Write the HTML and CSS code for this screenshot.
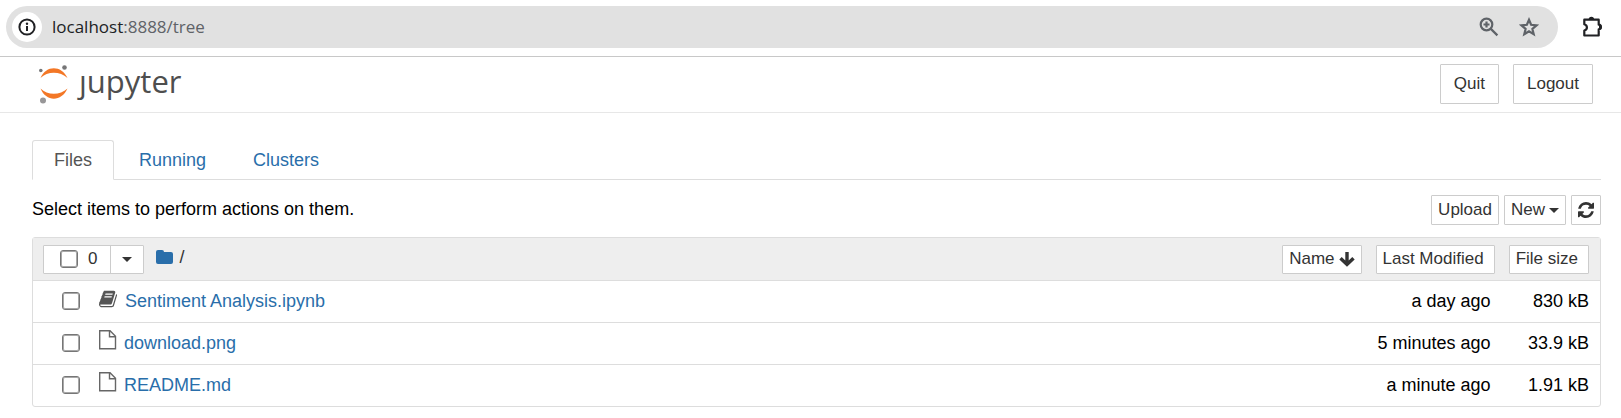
FILE: index.html
```html
<!DOCTYPE html>
<html lang="en">
<head>
<meta charset="utf-8">
<title>Home Page - Select or create a notebook</title>
<link rel="stylesheet" href="styles.css">
</head>
<body>
<div class="browser-bar">
  <div class="omnibox">
    <button class="round" type="button" aria-label="View site information">
      <svg width="18" height="18" viewBox="0 0 18 18"><circle cx="9" cy="9" r="7.6" fill="none" stroke="#202124" stroke-width="2"/><path d="M9 8v5" stroke="#202124" stroke-width="2"/><circle cx="9" cy="5.700" r="1.200" fill="#202124"/></svg>
    </button>
    <div class="url"><span class="host">localhost</span>:8888/tree</div>
    <button class="plain" type="button" aria-label="Zoom">
      <svg width="20" height="20" viewBox="0 0 20 20" fill="none" stroke="#5f6368" stroke-width="2.200"><circle cx="7.500" cy="7.500" r="5.800"/><path d="M11.600 11.600l6.800 6.800M7.500 4.500v6M4.500 7.500h6"/></svg>
    </button>
    <button class="plain" type="button" aria-label="Bookmark this tab">
      <svg width="20" height="20" viewBox="0 0 20 20" fill="none" stroke="#5f6368" stroke-width="2.200"><path d="M10 2.800l2.100 5 5.500.5-4.200 3.600 1.300 5.300-4.700-2.900-4.700 2.900 1.300-5.300-4.200-3.600 5.500-.5z"/></svg>
    </button>
  </div>
  <button class="plain" type="button" aria-label="Extensions">
    <svg width="22" height="22" viewBox="0 0 22 22"><path d="M3.300 3.700h14.400v5q2.200.2 2.200 2.300t-2.200 2.300v6.200H3.300v-5q2.600-.8 2.600-3.100T3.300 8.300z" fill="none" stroke="#202124" stroke-width="2.200" stroke-linejoin="round"/><path d="M7.700 3.500a2.700 2.700 0 0 1 5.400 0zM18 8.300a2.700 2.700 0 0 1 0 5.400z" fill="#202124"/></svg>
  </button>
</div>

<header class="header">
  <a class="logo" href="#" aria-label="jupyter">
    <svg width="32" height="40" viewBox="0 0 32 40"><path d="M2.500 14C8 1 23.500 1 29.500 14 22 7 9.500 7 2.500 14zM2.500 24.500C8 38 23.500 38 29.500 24.500 22 31.500 9.500 31.500 2.500 24.500z" fill="#f37726"/><circle cx="2.800" cy="6.500" r="1.800" fill="#767677"/><circle cx="26.500" cy="3.500" r="2.300" fill="#767677"/><circle cx="5" cy="36.500" r="3" fill="#989798"/></svg>
    <span class="wordmark">ȷupyter</span>
  </a>
  <button class="btn large" type="button">Quit</button>
  <button class="btn large" type="button">Logout</button>
</header>

<main class="main">
  <nav class="tabs">
    <a class="tab active" href="#files">Files</a>
    <a class="tab" href="#running">Running</a>
    <a class="tab" href="#clusters">Clusters</a>
  </nav>

  <div class="toolbar">
    <p class="hint">Select items to perform actions on them.</p>
    <button class="btn" type="button">Upload</button>
    <button class="btn" type="button">New <span class="caret"></span></button>
    <button class="btn refresh" type="button" aria-label="Refresh notebook list">
      <svg width="16" height="16" viewBox="0 0 1536 1536" fill="#333"><path d="M1511 928q0 5-1 7-64 268-268 434.500T764 1536q-146 0-282.500-55T238 1324l-129 129q-19 19-45 19t-45-19-19-45V960q0-26 19-45t45-19h448q26 0 45 19t19 45-19 45l-137 137q71 66 161 102t187 36q134 0 250-65t186-179q11-17 53-117 8-23 30-23h192q13 0 22.500 9.500t9.500 22.500zm25-800v448q0 26-19 45t-45 19h-448q-26 0-45-19t-19-45 19-45l138-138Q969 256 768 256q-134 0-250 65T332 500q-11 17-53 117-8 23-30 23H50q-13 0-22.500-9.500T18 608v-7q65-268 270-434.500T768 0q146 0 284 55.500T1297 212l130-129q19-19 45-19t45 19 19 45z"/></svg>
    </button>
  </div>

  <table class="list">
    <thead>
      <tr>
        <th class="col-name">
          <div class="list-head">
            <div class="select-group">
              <label class="select-all"><input class="check" type="checkbox"><span>0</span></label>
              <button class="select-menu" type="button" aria-label="Selection menu"><span class="caret"></span></button>
            </div>
            <a class="crumb" href="#" aria-label="Root folder"><svg width="18" height="15" viewBox="0 0 18 15"><path d="M0 2Q0 0 2 0h4q2 0 2 2h7q2 0 2 2v8q0 2-2 2H2q-2 0-2-2z" fill="#296eaa"/></svg></a>
            <span class="slash">/</span>
            <button class="btn sort" type="button">Name <svg width="16" height="15" viewBox="0 0 16 15" fill="none" stroke="#333" stroke-width="3.400"><path d="M8 0v12M1.500 6.200l6.500 6.300 6.500-6.300"/></svg></button>
          </div>
        </th>
        <th class="col-side"><button class="btn sort wide" type="button">Last Modified</button></th>
        <th class="col-side"><button class="btn sort wide" type="button">File size</button></th>
      </tr>
    </thead>
    <tbody>
      <tr>
        <td><div class="item"><input class="check" type="checkbox" aria-label="Select Sentiment Analysis.ipynb">
          <svg class="icon" width="18" height="18" viewBox="0 0 1664 1536"><path d="M1639 350q40 57 18 129l-275 906q-19 64-76.500 107.500T1183 1536H260q-77 0-148.500-53.500T12 1351q-24-67-2-127 0-4 3-27t4-37q1-8-3-21.500t-3-19.500q2-11 8-21t16.500-23.500T52 1051q23-38 45-91.500t30-91.500q3-10 .5-30t-.5-28q3-11 17-28t17-23q21-36 42-92t25-90q1-9-2.500-32t.5-28q4-13 22-30.500t22-22.500q19-26 42.500-84.500T340 283q1-8-3-25.500t-2-26.500q2-8 9-18t18-23 17-21q8-12 16.500-30.500t15-35 16-36 19.500-32T469.500 12t36-11.500T553 6l-1 3q38-9 51-9h761q74 0 114 56t18 130l-274 906q-36 119-71.500 153.500T1022 1280H153q-27 0-38 15-11 16-1 43 24 70 144 70h923q29 0 56-15.500t35-41.500l300-987q7-22 5-57 38 15 59 43zM575 352q-4 13 2 22.500t20 9.500h608q13 0 25.500-9.500T1247 352l21-64q4-13-2-22.500t-20-9.500H638q-13 0-25.500 9.500T596 288zm-83 256q-4 13 2 22.500t20 9.500h608q13 0 25.500-9.500T1164 608l21-64q4-13-2-22.500t-20-9.500H555q-13 0-25.500 9.500T513 544z" fill="#555"/></svg>
          <a class="link" href="#">Sentiment Analysis.ipynb</a></div></td>
        <td class="modified">a day ago</td>
        <td class="size">830 kB</td>
      </tr>
      <tr>
        <td><div class="item"><input class="check" type="checkbox" aria-label="Select download.png">
          <svg class="icon file" width="18" height="20" viewBox="0 0 18 20"><path d="M.7.700h10.300l5.500 5.500v12.600H.7zM10.500.700v6h6" fill="none" stroke="#666" stroke-width="1.400"/></svg>
          <a class="link" href="#">download.png</a></div></td>
        <td class="modified">5 minutes ago</td>
        <td class="size">33.9 kB</td>
      </tr>
      <tr>
        <td><div class="item"><input class="check" type="checkbox" aria-label="Select README.md">
          <svg class="icon file" width="18" height="20" viewBox="0 0 18 20"><path d="M.7.700h10.300l5.500 5.500v12.600H.7zM10.500.700v6h6" fill="none" stroke="#666" stroke-width="1.400"/></svg>
          <a class="link" href="#">README.md</a></div></td>
        <td class="modified">a minute ago</td>
        <td class="size">1.91 kB</td>
      </tr>
    </tbody>
  </table>
</main>
</body>
</html>
```
FILE: styles.css
```css
* { box-sizing: border-box; }

body {
  margin: 0;
  background: #fff;
  color: #000;
  font: 18px/24px "Liberation Sans", Arial, sans-serif;
}

svg { display: block; flex: none; }
a { color: #296eaa; text-decoration: none; }
button { font-family: inherit; cursor: pointer; }

/* Browser bar */
.browser-bar {
  display: flex;
  align-items: center;
  gap: 23px;
  padding: 6px 18px 8px 6px;
  border-bottom: 1px solid #c8c8c8;
}

.omnibox {
  display: flex;
  flex: 1;
  align-items: center;
  gap: 20px;
  height: 42px;
  padding: 0 19px 0 6px;
  border-radius: 21px;
  background: #e1e1e1;
}

.round,
.plain {
  display: grid;
  place-items: center;
  padding: 0;
  border: 0;
  background: none;
}

.round {
  width: 30px;
  height: 30px;
  margin-right: -10px;
  border-radius: 50%;
  background: #fff;
}

.url {
  flex: 1;
  color: #5f6368;
  font: 17px/24px "Open Sans", sans-serif;
}

.host { color: #202124; }

/* Header */
.header {
  display: flex;
  align-items: center;
  gap: 14px;
  padding: 7px 28px 8px 38px;
  border-bottom: 1px solid #e7e7e7;
}

.logo {
  display: flex;
  align-items: center;
  gap: 9px;
  margin-right: auto;
  color: #4e4e4e;
}

.wordmark {
  padding-bottom: 6px;
  font: 500 31px/32px "Open Sans", sans-serif;
}

.btn {
  display: flex;
  align-items: center;
  justify-content: center;
  gap: 4px;
  height: 30px;
  padding: 0 6px;
  border: 1px solid #ccc;
  border-radius: 1px;
  background: #fff;
  color: #333;
  font-size: 17px;
  line-height: 24px;
}

.btn.large {
  height: 40px;
  padding: 0 13px;
}

.caret {
  border-top: 5px solid #333;
  border-right: 5px solid transparent;
  border-left: 5px solid transparent;
}

/* Tabs and toolbar */
.main { padding: 27px 20px 10px 32px; }

.tabs {
  display: flex;
  gap: 3px;
  border-bottom: 1px solid #ddd;
}

.tab {
  margin-bottom: -1px;
  padding: 7px 21px;
  border: 1px solid transparent;
  border-radius: 3px 3px 0 0;
}

.tab.active {
  border-color: #ddd;
  border-bottom-color: #fff;
  background: #fff;
  color: #555;
}

.toolbar {
  display: flex;
  align-items: center;
  gap: 5px;
  padding: 15px 0 12px;
}

.hint {
  flex: 1;
  margin: 0;
  padding-bottom: 2px;
}

.refresh { width: 30px; }

/* File list */
.list {
  width: 100%;
  border: 1px solid #ddd;
  border-radius: 3px;
  border-spacing: 0;
}

th,
td {
  height: 42px;
  padding: 0;
  border-top: 1px solid #ddd;
  white-space: nowrap;
}

th {
  border-top: 0;
  background: #eee;
  font-weight: normal;
}

td { padding-bottom: 2px; }

.col-name {
  width: 100%;
  padding-left: 10px;
}

.col-side { padding-left: 14px; }
.col-side:last-child { padding-right: 11px; }

.list-head {
  display: flex;
  align-items: center;
}

.select-group {
  display: flex;
  height: 29px;
  border: 1px solid #ccc;
  border-radius: 1px;
  background: #fff;
}

.select-all {
  display: flex;
  align-items: center;
  gap: 10px;
  padding: 0 13px 0 16px;
  color: #333;
  font-size: 17px;
}

.select-menu {
  display: grid;
  place-items: center;
  width: 33px;
  padding: 0;
  border: 0;
  border-left: 1px solid #ccc;
  background: none;
}

.check {
  width: 18px;
  height: 18px;
  margin: 0;
  border: 1px solid #767676;
  border-radius: 3px;
  background: #fff;
  appearance: none;
  box-shadow: inset 0 0 0 1px #a8a8a8;
}

.check:checked { background: #296eaa; }

.crumb {
  margin: 0 5px 4px 12px;
}

.slash {
  margin-bottom: 4px;
  color: #333;
}

.sort {
  height: 29px;
  margin-left: auto;
}

.sort.wide { padding-right: 10px; }

.item {
  display: flex;
  align-items: center;
  padding-left: 29px;
}

.icon { margin: 0 8px 3px 19px; }
.icon.file { margin: 0 7px 5px 19px; }

.modified,
.size { text-align: right; }

.modified { padding-right: 4px; }
.size { padding-right: 11px; }
```
